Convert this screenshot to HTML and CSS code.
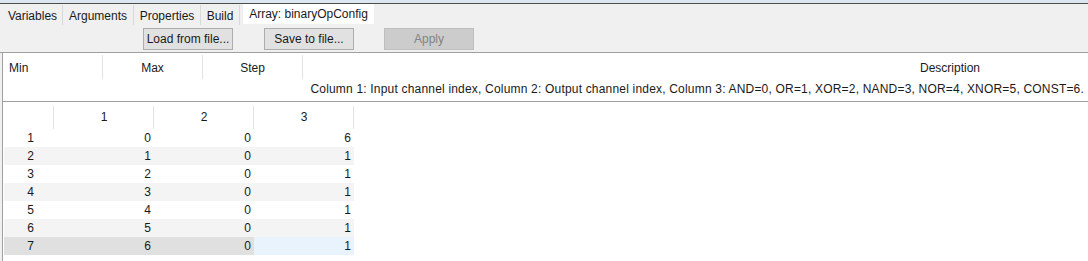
FILE: index.html
```html
<!DOCTYPE html>
<html lang="en">
<head>
  <meta charset="UTF-8" />
  <title>Array: binaryOpConfig</title>
  <link rel="stylesheet" href="styles.css">
</head>
<body>
  <div class="topbar"></div>
  <div class="tabs">
    <div class="tab tab-vars">Variables</div>
    <div class="tab tab-args">Arguments</div>
    <div class="tab tab-props">Properties</div>
    <div class="tab tab-build">Build</div>
    <div class="tab tab-array active">Array: binaryOpConfig</div>
  </div>
  <div class="toolbar">
    <button class="btn">Load from file...</button>
    <button class="btn">Save to file...</button>
    <button class="btn" disabled>Apply</button>
  </div>
  <div class="panel">
    <div class="params">
      <div class="param-cell param-min">Min</div>
      <div class="param-cell param-mid">Max</div>
      <div class="param-cell param-mid">Step</div>
      <div class="param-cell param-desc">Description</div>
      <div class="param-text">Column 1: Input channel index, Column 2: Output channel index, Column 3: AND=0, OR=1, XOR=2, NAND=3, NOR=4, XNOR=5, CONST=6.</div>
    </div>
    <table class="grid">
      <colgroup>
        <col class="col-head">
        <col class="col-val">
        <col class="col-val">
        <col class="col-val">
      </colgroup>
      <thead>
        <tr>
          <th></th>
          <th>1</th>
          <th>2</th>
          <th>3</th>
        </tr>
      </thead>
      <tbody id="rows"></tbody>
    </table>
  </div>
  <script>
    const data = [
      [0, 0, 6],
      [1, 0, 1],
      [2, 0, 1],
      [3, 0, 1],
      [4, 0, 1],
      [5, 0, 1],
      [6, 0, 1]
    ];
    const tbody = document.getElementById('rows');
    data.forEach((row, i) => {
      const tr = document.createElement('tr');
      if (i % 2 === 1) tr.className = 'alt';
      if (i === data.length - 1) tr.className = 'selected';
      tr.innerHTML = `<td class="rowhead">${i + 1}</td>` +
        row.map((v) => `<td>${v}</td>`).join('');
      tbody.appendChild(tr);
    });
  </script>
</body>
</html>
```

FILE: styles.css
```css
body {
  margin: 0;
  background: #f0f0f0;
  font-family: "Liberation Sans", Arial, sans-serif;
  font-size: 12px;
  color: #1a1a1a;
  overflow: hidden;
}
.topbar {
  height: 3px;
  background: #dde7f2;
  border-bottom: 1px solid #4d4d4d;
}

/* tabs */
.tabs {
  display: flex;
  height: 21px;
  padding-left: 3px;
}
.tab {
  display: flex;
  align-items: center;
  justify-content: center;
  height: 20px;
  margin-top: 1px;
  border-right: 1px solid #d9d9d9;
  box-sizing: border-box;
  padding-top: 2px;
}
.tab-vars { width: 60px; }
.tab-args { width: 71px; }
.tab-props { width: 67px; }
.tab-build { width: 39px; }
.tab.active {
  width: 131px;
  margin-left: 3px;
  margin-top: 0;
  height: 20px;
  background: #fff;
  border-right: none;
  padding-top: 0;
}

/* toolbar */
.toolbar {
  display: flex;
  gap: 30px;
  height: 28px;
  padding: 3px 0 0 143px;
  box-sizing: border-box;
  border-bottom: 1px solid #a0a0a0;
}
.btn {
  width: 90px;
  height: 22px;
  background: #e1e1e1;
  border: 1px solid #adadad;
  font-family: inherit;
  font-size: 12px;
  color: #1a1a1a;
  padding: 0;
}
.btn:nth-child(2) { margin-left: 1px; }
.btn:disabled {
  background: #cccccc;
  border-color: #bfbfbf;
  color: #838383;
}

/* panel */
.panel {
  margin-left: 2px;
  border-left: 1px solid #a0a0a0;
  background: #fff;
  height: 208px;
}
.params {
  display: grid;
  grid-template-columns: 100px 100px 100px 1294px;
  grid-template-rows: 26px 22px;
  height: 48px;
  border-bottom: 1px solid #a0a0a0;
  overflow: hidden;
  width: 1085px;
}
.param-cell {
  height: 24px;
  margin-top: 2px;
  line-height: 26px;
  border-right: 1px solid #e3e3e3;
}
.param-min { padding-left: 6px; }
.param-mid { text-align: center; }
.param-desc {
  text-align: center;
  border-right: none;
}
.param-text {
  grid-column: 1 / 5;
  width: 1081px;
  text-align: right;
  line-height: 20px;
  letter-spacing: 0.19px;
  white-space: nowrap;
}

/* table */
.grid {
  border-collapse: collapse;
  table-layout: fixed;
  width: 350px;
  margin-left: 1px;
}
.col-head { width: 50px; }
.col-val { width: 100px; }
.grid th {
  height: 25px;
  padding: 2px 0 0;
  font-weight: normal;
  text-align: center;
  vertical-align: middle;
  background: linear-gradient(#e3e3e3, #e3e3e3) right bottom / 1px 23px no-repeat #fff;
}
.grid td {
  height: 18px;
  padding: 0 3px 0 0;
  text-align: right;
  line-height: 18px;
}
.grid td.rowhead {
  text-align: center;
  padding: 0 0 0 3px;
}
.grid tr.alt td { background: #f4f4f4; }
.grid tr.selected td { background: #e0e0e0; }
.grid tr.selected td:last-child { background: #e9f3fd; }
```
